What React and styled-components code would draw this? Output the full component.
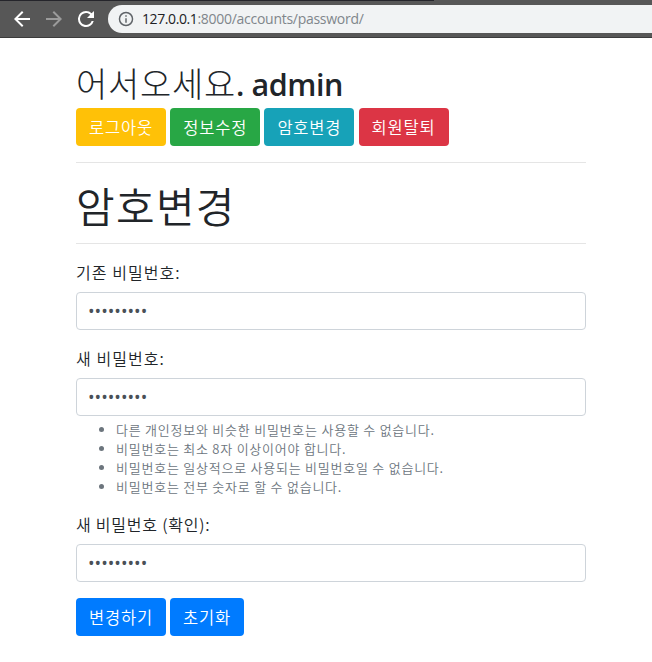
import React from "react";
import styled, { createGlobalStyle } from "styled-components";

const Global = createGlobalStyle`
  * { box-sizing: border-box; }
  body {
    margin: 0;
    background: #fff;
    color: #212529;
    font: 300 16px/24px "Open Sans", "Noto Sans CJK KR", sans-serif;
    overflow: hidden;
  }
`;

const kr = `"Noto Sans CJK KR", "Open Sans", sans-serif`;
const krDemi = `"Noto Sans CJK KR DemiLight", "Noto Sans CJK KR", "Open Sans", sans-serif`;

const Toolbar = styled.header`
  display: flex;
  align-items: center;
  height: 38px;
  padding-left: 13px;
  background: linear-gradient(#25252b, #25252b) 0 0 / 434px 1px no-repeat #575757;
  border-bottom: 1px solid #3b3b3b;
`;

const NavIcon = styled.svg`
  flex: none;
  width: 18px;
  height: 18px;
  margin-right: 14px;
  fill: ${(p) => p.$color};
`;

const AddressBar = styled.div`
  display: flex;
  align-items: center;
  flex: 1;
  height: 28px;
  margin-left: -1px;
  padding-left: 10px;
  border-radius: 14px 0 0 14px;
  background: #f1f3f4;
`;

const InfoIcon = styled.svg`
  width: 16px;
  height: 16px;
  fill: #5f6368;
`;

const Url = styled.span`
  margin-left: 8px;
  font: 400 14px/20px "Open Sans", sans-serif;
  letter-spacing: -0.28px;
  color: #80868b;
  white-space: nowrap;
`;

const Host = styled.span`
  color: #202124;
  letter-spacing: -0.4px;
`;

const Page = styled.main`
  width: 510px;
  margin: 24px 0 0 76px;
`;

const Greeting = styled.h2`
  height: 38px;
  margin: 0 0 8px;
  font: 300 34px/41px ${kr};
  letter-spacing: 0.7px;
  white-space: nowrap;
`;

const UserName = styled.strong`
  font: 600 30.5px/36px "Open Sans", sans-serif;
  letter-spacing: -0.4px;
  vertical-align: 1px;
`;

const Title = styled.h1`
  height: 48px;
  margin: 0;
  font: 350 42px/51px ${krDemi};
  letter-spacing: 1.3px;
`;

const Rule = styled.hr`
  height: 1px;
  margin: 16px 0;
  border: 0;
  background: #e5e5e5;
`;

const ButtonRow = styled.div`
  display: flex;
  gap: ${(p) => p.$gap || "4.2px"};
`;

const Button = styled.button`
  height: 38px;
  padding: 0 0 0 13px;
  width: ${(p) => p.$width || 90}px;
  border: 0;
  border-radius: 4px;
  background: ${(p) => p.$color};
  color: #fff;
  font: 400 16.5px/38px ${krDemi};
  letter-spacing: 0.82px;
  text-align: left;
  white-space: nowrap;
`;

const Field = styled.div`
  margin-bottom: 16px;
`;

const Label = styled.label`
  display: block;
  height: 24px;
  margin-bottom: 8px;
  font: 350 16px/24px ${krDemi};
  letter-spacing: ${(p) => p.$spacing || "1.05px"};
`;

const PasswordInput = styled.input`
  display: block;
  width: 100%;
  height: 38px;
  padding: 7px 12px 7px 11px;
  border: 1px solid #ced4da;
  border-radius: 4px;
  outline: 0;
  background: #fff;
  color: #495057;
  font: 400 17.5px/22px "Open Sans", sans-serif;
`;

const HelpList = styled.ul`
  margin: 4px 0 0;
  padding-left: 40px;
  color: #6c757d;
  font: 350 13px/19px ${krDemi};
  height: 76px;
`;

const HelpItem = styled.li`
  letter-spacing: 0.76px;
  white-space: nowrap;
`;

const ACTIONS = [
  ["로그아웃", "#ffc107"],
  ["정보수정", "#28a745"],
  ["암호변경", "#17a2b8"],
  ["회원탈퇴", "#dc3545"],
];

const RULES = [
  "다른 개인정보와 비슷한 비밀번호는 사용할 수 없습니다.",
  "비밀번호는 최소 8자 이상이어야 합니다.",
  "비밀번호는 일상적으로 사용되는 비밀번호일 수 없습니다.",
  "비밀번호는 전부 숫자로 할 수 없습니다.",
];

export default function App() {
  return (
    <>
      <Global />
      <Toolbar>
        <NavIcon viewBox="3 3 18 18" $color="#fff">
          <path d="M20 11H7.83l5.59-5.59L12 4l-8 8 8 8 1.41-1.41L7.83 13H20v-2z" />
        </NavIcon>
        <NavIcon viewBox="3 3 18 18" $color="#9b9b9b">
          <path d="M12 4l-1.41 1.41L16.17 11H4v2h12.17l-5.58 5.59L12 20l8-8z" />
        </NavIcon>
        <NavIcon viewBox="3 3 18 18" $color="#fff">
          <path d="M17.65 6.35A7.96 7.96 0 0 0 12 4a8 8 0 1 0 7.73 10h-2.08A6 6 0 1 1 12 6c1.66 0 3.14.69 4.22 1.78L13 11h7V4l-2.35 2.35z" />
        </NavIcon>
        <AddressBar>
          <InfoIcon viewBox="1 1 22 22">
            <path d="M11 17h2v-6h-2v6zm1-15a10 10 0 1 0 0 20 10 10 0 0 0 0-20zm0 18a8 8 0 1 1 0-16 8 8 0 0 1 0 16zM11 9h2V7h-2v2z" />
          </InfoIcon>
          <Url>
            <Host>127.0.0.1</Host>:8000/accounts/password/
          </Url>
        </AddressBar>
      </Toolbar>
      <Page>
        <Greeting>
          어서오세요<UserName>. admin</UserName>
        </Greeting>
        <ButtonRow>
          {ACTIONS.map(([text, color]) => (
            <Button key={text} type="button" $color={color}>{text}</Button>
          ))}
        </ButtonRow>
        <Rule />
        <Title>암호변경</Title>
        <Rule />
        <form>
          <Field>
            <Label htmlFor="old">기존 비밀번호:</Label>
            <PasswordInput id="old" type="password" defaultValue="password1" />
          </Field>
          <Field>
            <Label htmlFor="new1">새 비밀번호:</Label>
            <PasswordInput id="new1" type="password" defaultValue="password1" />
            <HelpList>
              {RULES.map((text) => <HelpItem key={text}>{text}</HelpItem>)}
            </HelpList>
          </Field>
          <Field>
            <Label htmlFor="new2" $spacing="0.78px">새 비밀번호 (확인):</Label>
            <PasswordInput id="new2" type="password" defaultValue="password1" />
          </Field>
          <ButtonRow $gap="4px">
            <Button type="button" $color="#007bff">변경하기</Button>
            <Button type="button" $color="#007bff" $width={74}>초기화</Button>
          </ButtonRow>
        </form>
      </Page>
    </>
  );
}
